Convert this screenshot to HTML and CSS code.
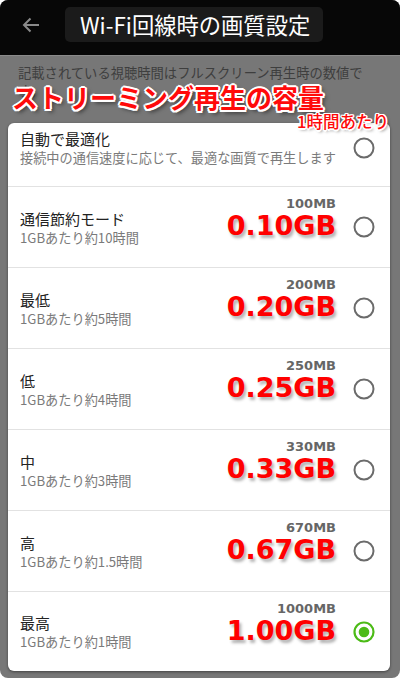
FILE: index.html
```html
<!DOCTYPE html>
<html lang="ja">
<head>
<meta charset="utf-8">
<title>Wi-Fi回線時の画質設定</title>
<link rel="stylesheet" href="styles.css">
</head>
<body>
<div class="frame">
  <header class="header">
    <svg class="back" width="18" height="16" viewBox="0 0 18 16" aria-hidden="true">
      <path d="M17 8H2M8.5 1.5L2 8l6.5 6.5" fill="none" stroke="#8a8a8a" stroke-width="2"/>
    </svg>
    <div class="title-box"><h1 class="title">Wi-Fi回線時の画質設定</h1></div>
  </header>

  <p class="desc">記載されている視聴時間はフルスクリーン再生時の数値です。</p>

  <div class="banner">ストリーミング再生の容量</div>
  <div class="per-hour">1時間あたり</div>

  <ul class="card">
    <li class="row row-first">
      <div class="text">
        <div class="name">自動で最適化</div>
        <div class="sub">接続中の通信速度に応じて、最適な画質で再生します</div>
      </div>
      <svg class="radio" width="22" height="22" viewBox="0 0 22 22"><circle cx="11" cy="11" r="9.5" fill="none" stroke="#6b6b6b" stroke-width="2"/></svg>
    </li>
    <li class="row">
      <div class="text">
        <div class="name">通信節約モード</div>
        <div class="sub">1GBあたり約10時間</div>
      </div>
      <div class="value"><span class="mb">100MB</span><span class="gb">0.10GB</span></div>
      <svg class="radio" width="22" height="22" viewBox="0 0 22 22"><circle cx="11" cy="11" r="9.5" fill="none" stroke="#6b6b6b" stroke-width="2"/></svg>
    </li>
    <li class="row">
      <div class="text">
        <div class="name">最低</div>
        <div class="sub">1GBあたり約5時間</div>
      </div>
      <div class="value"><span class="mb">200MB</span><span class="gb">0.20GB</span></div>
      <svg class="radio" width="22" height="22" viewBox="0 0 22 22"><circle cx="11" cy="11" r="9.5" fill="none" stroke="#6b6b6b" stroke-width="2"/></svg>
    </li>
    <li class="row">
      <div class="text">
        <div class="name">低</div>
        <div class="sub">1GBあたり約4時間</div>
      </div>
      <div class="value"><span class="mb">250MB</span><span class="gb">0.25GB</span></div>
      <svg class="radio" width="22" height="22" viewBox="0 0 22 22"><circle cx="11" cy="11" r="9.5" fill="none" stroke="#6b6b6b" stroke-width="2"/></svg>
    </li>
    <li class="row">
      <div class="text">
        <div class="name">中</div>
        <div class="sub">1GBあたり約3時間</div>
      </div>
      <div class="value"><span class="mb">330MB</span><span class="gb">0.33GB</span></div>
      <svg class="radio" width="22" height="22" viewBox="0 0 22 22"><circle cx="11" cy="11" r="9.5" fill="none" stroke="#6b6b6b" stroke-width="2"/></svg>
    </li>
    <li class="row">
      <div class="text">
        <div class="name">高</div>
        <div class="sub">1GBあたり約1.5時間</div>
      </div>
      <div class="value"><span class="mb">670MB</span><span class="gb">0.67GB</span></div>
      <svg class="radio" width="22" height="22" viewBox="0 0 22 22"><circle cx="11" cy="11" r="9.5" fill="none" stroke="#6b6b6b" stroke-width="2"/></svg>
    </li>
    <li class="row row-last">
      <div class="text">
        <div class="name">最高</div>
        <div class="sub">1GBあたり約1時間</div>
      </div>
      <div class="value"><span class="mb">1000MB</span><span class="gb">1.00GB</span></div>
      <svg class="radio" width="22" height="22" viewBox="0 0 22 22"><circle cx="11" cy="11" r="9.5" fill="none" stroke="#4cbb17" stroke-width="2.2"/><circle cx="11" cy="11" r="5.3" fill="#4cbb17"/></svg>
    </li>
  </ul>
</div>
</body>
</html>
```

FILE: styles.css
```css
html, body {
  margin: 0;
  padding: 0;
  background: #ffffff;
}

body {
  font-family: "Noto Sans CJK JP", "Noto Sans", sans-serif;
}

.frame {
  position: relative;
  width: 400px;
  height: 678px;
  background: #777777;
  border-radius: 8px;
  overflow: hidden;
  box-sizing: border-box;
}

.header {
  height: 55px;
  background: #070707;
  border-bottom: 1px solid #8a8a8a;
  display: flex;
  align-items: flex-start;
  padding-left: 22px;
  box-sizing: content-box;
}

.back {
  margin-top: 17px;
  flex: none;
}

.title-box {
  margin-left: 25px;
  margin-top: 7px;
  width: 258px;
  height: 35px;
  background: #1b1b1b;
  border-radius: 5px;
  display: flex;
  align-items: center;
  padding-left: 15px;
  box-sizing: border-box;
}

.title {
  margin: 0;
  font-size: 22.3px;
  font-weight: 400;
  color: #ffffff;
  line-height: 1;
  white-space: nowrap;
}

.desc {
  margin: 0;
  padding: 8px 18px 23px 18px;
  font-size: 13.3px;
  line-height: 18px;
  color: #3e3e3e;
  height: 36px;
  overflow: hidden;
}

.banner {
  position: absolute;
  left: 12px;
  top: 81px;
  font-size: 26px;
  line-height: 32px;
  font-weight: 700;
  color: #ff0a0a;
  white-space: nowrap;
  text-shadow:
    2px 0 0 #fff, -2px 0 0 #fff, 0 2px 0 #fff, 0 -2px 0 #fff,
    1.5px 1.5px 0 #fff, -1.5px 1.5px 0 #fff, 1.5px -1.5px 0 #fff, -1.5px -1.5px 0 #fff,
    3px 3px 4px rgba(0, 0, 0, 0.6);
}

.per-hour {
  position: absolute;
  left: 297px;
  top: 111px;
  font-size: 16.5px;
  line-height: 20px;
  font-weight: 500;
  color: #ff0a0a;
  white-space: nowrap;
  text-shadow:
    1.5px 0 0 #fff, -1.5px 0 0 #fff, 0 1.5px 0 #fff, 0 -1.5px 0 #fff,
    1px 1px 0 #fff, -1px 1px 0 #fff, 1px -1px 0 #fff, -1px -1px 0 #fff,
    2px 2px 3px rgba(0, 0, 0, 0.5);
}

.card {
  list-style: none;
  margin: 0 10px 0 8px;
  padding: 0;
  background: #ffffff;
  border-radius: 6px;
  box-shadow: 0 1px 3px rgba(0, 0, 0, 0.45);
  overflow: hidden;
}

.row {
  display: flex;
  align-items: center;
  height: 81px;
  box-sizing: border-box;
  border-bottom: 1px solid #e2e2e2;
  padding: 0 15px 0 12px;
}

.row-first {
  height: 64px;
  padding-top: 5px;
  padding-bottom: 19px;
}

.row-last {
  height: 79px;
  border-bottom: none;
}

.text {
  flex: 1;
  min-width: 0;
}

.name {
  font-size: 15px;
  line-height: 21px;
  color: #222222;
  white-space: nowrap;
}

.sub {
  font-size: 13.2px;
  line-height: 18px;
  color: #7a7a7a;
  white-space: nowrap;
}

.value {
  display: flex;
  flex-direction: column;
  align-items: flex-end;
  margin-bottom: 16px;
  margin-right: 17px;
  font-family: "DejaVu Sans", sans-serif;
  font-weight: 700;
}

.mb {
  font-size: 13px;
  line-height: 14px;
  color: #666666;
}

.gb {
  font-size: 27px;
  line-height: 30px;
  color: #ff0000;
  text-shadow: 2px 3px 3px rgba(0, 0, 0, 0.3);
}

.radio {
  flex: none;
  display: block;
}
```
